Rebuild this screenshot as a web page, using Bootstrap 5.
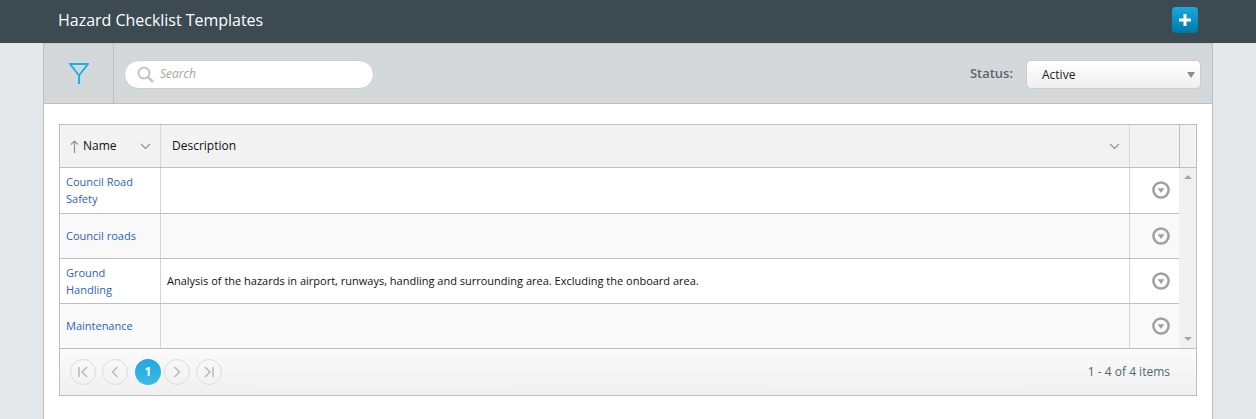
<!DOCTYPE html>
<html lang="en">
<head>
<meta charset="utf-8">
<title>Hazard Checklist Templates</title>
<link href="https://cdn.jsdelivr.net/npm/bootstrap@5.3.0/dist/css/bootstrap.min.css" rel="stylesheet">
<style>
html,body{height:419px;overflow:hidden}
body{background:#e5e8eb;font-family:"Open Sans","Liberation Sans",sans-serif;font-size:11px;color:#111}
.topbar{height:43px;background:#3c4a52;padding:0 58px}
.topbar h1{font-size:16px;font-weight:400;color:#fff;margin:0 0 2px;line-height:39px;letter-spacing:-.02px}
.addbtn{width:26px;height:26px;border-radius:4px;background:linear-gradient(#18a9df,#0077a8);border:0;padding:0;margin-top:-3px}
.sheet{margin:0 43px;height:376px;background:#fff;border-left:1px solid #bcbfc1;border-right:1px solid #bcbfc1}
.tools{height:61px;background:#d5d8db;border-bottom:1px solid #bcbfc1;border-top:1px solid #c6c9cb}
.funnelcell{width:70px;border-right:1px solid #bcbfc1}
.searchbox{width:250px;height:29px;margin:1px 0 0 10px;background:#fff;border:1px solid #c9cccf;border-radius:15px;padding-left:12px;gap:6px}
.searchbox input{border:0;outline:0;background:transparent;font-style:italic;font-size:12px;width:190px;padding:0;font-family:inherit}
.searchbox input::placeholder{color:#a5a5a5;opacity:1}
.statuslabel{font-size:13px;font-weight:600;color:#5f6468;margin-right:13px}
.statussel{width:175px;height:29px;margin:1px 11px 0 0;background:linear-gradient(#fff,#efefef);border:1px solid #c9cccf;border-radius:5px;padding:2px 0 0 15px;font-size:12px;color:#222;position:relative}
.statussel i{position:absolute;right:5px;top:11px;border:4px solid transparent;border-top:6px solid #8b8b8b;border-bottom:0}
.gridwrap{margin:20px 15px 0;height:272px;border:1px solid #bcbfc1;width:1138px}
.rowline{display:grid;grid-template-columns:101px 969px 50px 16px}
.headline{height:43px;background:#f2f2f2;border-bottom:1px solid #bcbfc1;font-size:12px;color:#111}
.headline>div{border-right:1px solid #d6d6d6;padding:0 0 0 11px;position:relative;display:flex;align-items:center}
.headline>div:first-child{padding-left:10px}
.headline>div:last-child{border-right:0}
.headline>div:nth-child(3){border-right:1px solid #bcbfc1}
.chev{position:absolute;right:9px;top:18px}
.bodyzone{display:flex;height:180px}
.rowsbox{width:1119px}
.dataline{display:grid;grid-template-columns:101px 969px 49px;border-bottom:1px solid #bcbfc1;height:45px}
.dataline:first-child{height:46px}
.dataline:last-child{border-bottom:0;height:44px}
.dataline.alt{background:#f9f9f9}
.dataline>div{border-right:1px solid #d6d6d6;display:flex;align-items:center;padding:0 6px 1px;line-height:17px}
.dataline>div:last-child{border-right:0;justify-content:center;padding:0 0 1px 13px}
.dataline a{color:#2b62c4;text-decoration:none}
.scrolltrack{width:17px;background:#f0f0f0;position:relative}
.scrolltrack i{position:absolute;left:5px;border:4px solid transparent}
.scrolltrack .up{top:7px;border-top:0;border-bottom:4px solid #a6a6a6}
.scrolltrack .dn{bottom:7px;border-bottom:0;border-top:4px solid #a6a6a6}
.pagerline{height:47px;border-top:1px solid #bcbfc1;background:linear-gradient(#fafafa,#f0f0f0);padding:0 26px 0 10px}
.pgbtn{width:26px;height:26px;border-radius:50%;border:1px solid #dcdcdc;display:flex;align-items:center;justify-content:center}
.pgbtn.on{background:linear-gradient(#1fa8e0,#39bbe6);border:0;color:#fff;font-weight:700;font-size:12px;margin:0 -3px 0 1px}
.pagegroup{gap:6px}
.pageinfo{font-size:12px;color:#4f6674}
</style>
</head>
<body>
<header class="topbar d-flex justify-content-between align-items-center">
<h1>Hazard Checklist Templates</h1>
<button class="addbtn d-flex align-items-center justify-content-center" aria-label="Add">
<svg width="12" height="12" viewBox="0 0 12 12"><path d="M4.500 0h3v4.500H12v3H7.500V12h-3V7.500H0v-3h4.500z" fill="#fff"/></svg>
</button>
</header>
<main class="sheet">
<div class="tools d-flex align-items-center">
<div class="funnelcell h-100 d-flex align-items-center justify-content-center">
<svg width="20" height="21" viewBox="0 0 20 21" fill="none" stroke="#1fb0e6" stroke-width="2"><path d="M1 1h18L10 12.500zM10 12.500V21"/></svg>
</div>
<div class="searchbox d-flex align-items-center">
<svg width="17" height="17" viewBox="0 0 17 17" fill="none" stroke="#c4c4c4"><circle cx="7" cy="7" r="5.500" stroke-width="2"/><path d="M11 11l5 5" stroke-width="2.500"/></svg>
<input type="text" placeholder="Search">
</div>
<div class="ms-auto d-flex align-items-center">
<span class="statuslabel">Status:</span>
<div class="statussel d-flex align-items-center">Active<i></i></div>
</div>
</div>
<section class="gridwrap">
<div class="rowline headline">
<div><svg width="9" height="13" viewBox="0 0 9 13" fill="none" stroke="#8d9498" stroke-width="1.200" class="me-1"><path d="M4.500 13V1M1 4.500L4.500 1 8 4.500"/></svg>Name<svg class="chev" width="11" height="7" viewBox="0 0 11 7" fill="none" stroke="#8d9498" stroke-width="1.200"><path d="M1 1l4.500 4.500L10 1"/></svg></div>
<div>Description<svg class="chev" width="11" height="7" viewBox="0 0 11 7" fill="none" stroke="#8d9498" stroke-width="1.200"><path d="M1 1l4.500 4.500L10 1"/></svg></div>
<div></div>
<div></div>
</div>
<div class="bodyzone">
<div class="rowsbox">
<div class="dataline"><div><a href="#">Council Road Safety</a></div><div></div><div><svg width="18" height="18" viewBox="0 0 18 18"><circle cx="9" cy="9" r="7.600" fill="none" stroke="#a0a0a0" stroke-width="2.500"/><path d="M5.600 7.200h6.800L9 12z" fill="#a0a0a0"/></svg></div></div>
<div class="dataline alt"><div><a href="#">Council roads</a></div><div></div><div><svg width="18" height="18" viewBox="0 0 18 18"><circle cx="9" cy="9" r="7.600" fill="none" stroke="#a0a0a0" stroke-width="2.500"/><path d="M5.600 7.200h6.800L9 12z" fill="#a0a0a0"/></svg></div></div>
<div class="dataline"><div><a href="#">Ground Handling</a></div><div>Analysis of the hazards in airport, runways, handling and surrounding area. Excluding the onboard area.</div><div><svg width="18" height="18" viewBox="0 0 18 18"><circle cx="9" cy="9" r="7.600" fill="none" stroke="#a0a0a0" stroke-width="2.500"/><path d="M5.600 7.200h6.800L9 12z" fill="#a0a0a0"/></svg></div></div>
<div class="dataline alt"><div><a href="#">Maintenance</a></div><div></div><div><svg width="18" height="18" viewBox="0 0 18 18"><circle cx="9" cy="9" r="7.600" fill="none" stroke="#a0a0a0" stroke-width="2.500"/><path d="M5.600 7.200h6.800L9 12z" fill="#a0a0a0"/></svg></div></div>
</div>
<div class="scrolltrack"><i class="up"></i><i class="dn"></i></div>
</div>
<div class="pagerline d-flex align-items-center justify-content-between">
<div class="pagegroup d-flex align-items-center">
<span class="pgbtn"><svg width="12" height="12" viewBox="0 0 12 12" fill="none" stroke="#b5bbc0" stroke-width="1.500"><path d="M2 1v10M10 1L5 6l5 5"/></svg></span>
<span class="pgbtn"><svg width="12" height="12" viewBox="0 0 12 12" fill="none" stroke="#b5bbc0" stroke-width="1.500"><path d="M8.500 1L3.500 6l5 5"/></svg></span>
<span class="pgbtn on">1</span>
<span class="pgbtn"><svg width="12" height="12" viewBox="0 0 12 12" fill="none" stroke="#b5bbc0" stroke-width="1.500"><path d="M3.500 1l5 5-5 5"/></svg></span>
<span class="pgbtn"><svg width="12" height="12" viewBox="0 0 12 12" fill="none" stroke="#b5bbc0" stroke-width="1.500"><path d="M10 1v10M2 1l5 5-5 5"/></svg></span>
</div>
<span class="pageinfo">1 - 4 of 4 items</span>
</div>
</section>
</main>
<script src="https://cdn.jsdelivr.net/npm/bootstrap@5.3.0/dist/js/bootstrap.bundle.min.js"></script>
</body>
</html>
